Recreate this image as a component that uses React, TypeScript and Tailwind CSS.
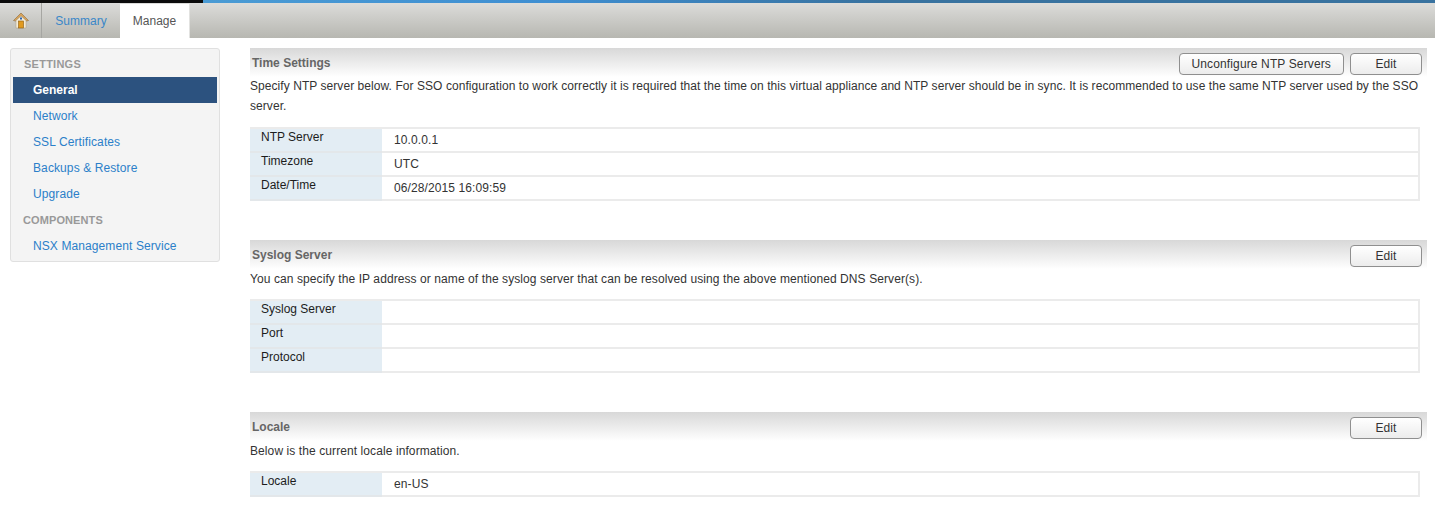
import React from 'react';

const Row: React.FC<{ label: string; value?: string }> = ({ label, value }) => (
  <div className="flex h-6">
    <div className="w-[132px] shrink-0 border-b-2 border-[#e3e7ea] bg-[#e3edf4] pl-[11px] leading-[16px] text-[#1c1c1c]">{label}</div>
    <div className="flex-1 border-b-2 border-r-2 border-[#ebebeb] pl-[12px] pt-[2px] tracking-[0.1px] text-[#333]">{value}</div>
  </div>
);

const Section: React.FC<{
  title: string;
  buttons: string[];
  desc: React.ReactNode;
  descClass: string;
  rows: { label: string; value?: string }[];
  className?: string;
}> = ({ title, buttons, desc, descClass, rows, className }) => (
  <section className={className}>
    <div className="flex h-[29px] items-start justify-between bg-gradient-to-b from-[#d8d8d8] to-white pl-[2px] pr-[5px]">
      <h2 className="pt-[6px] text-[12px] font-bold text-[#666]">{title}</h2>
      <div className="flex gap-[6px] pt-[5px]">
        {buttons.map((b) => (
          <button
            key={b}
            className="h-[22px] min-w-[72px] rounded-[4px] border border-[#8f8f8f] bg-gradient-to-b from-white to-[#ececec] px-[12px] text-[12px] tracking-[0.13px] text-[#333]"
          >
            {b}
          </button>
        ))}
      </div>
    </div>
    <p className={`leading-[20px] text-[#333] ${descClass}`}>{desc}</p>
    <div className="mr-[7px] border-t-2 border-[#ebebeb]">
      {rows.map((r) => (
        <Row key={r.label} label={r.label} value={r.value} />
      ))}
    </div>
  </section>
);

const App: React.FC = () => {
  return (
    <div className="h-[514px] w-[1435px] overflow-hidden bg-white font-['Liberation_Sans',Arial,sans-serif] text-[12px]">
      <div className="flex h-[3px]">
        <div className="w-[203px] bg-[#0c0c0c]" />
        <div className="flex-1 bg-gradient-to-r from-[#4a9bd4] via-[#3f8fd2] via-[28%] to-[#38729f] to-[55%]" />
      </div>
      <div className="flex h-[35px] bg-gradient-to-b from-[#dcdcda] to-[#b7b7b1]">
        <div className="flex w-[42px] items-center justify-center border-r border-[#a6a6a2] pb-[1px]">
          <svg width="16" height="17" viewBox="0 0 16 17">
            <path d="M8 1 L15.5 8.5 L13.5 9 L8 4 L2.5 9 L0.5 8.5 Z" fill="#d9a35a" stroke="#8a6a3a" strokeWidth="0.6" />
            <path d="M3 8.5 L8 4 L13 8.5 V16 H3 Z" fill="#f4ecd8" stroke="#a99a7c" strokeWidth="0.5" />
            <rect x="5.5" y="9" width="5" height="7" fill="#e19a1f" stroke="#8a5a10" strokeWidth="0.6" />
            <rect x="7" y="5.5" width="2" height="2" fill="#2a62b0" />
          </svg>
        </div>
        <div className="flex w-[78px] items-center justify-center text-[#3a87c8]">Summary</div>
        <div className="mt-[1px] flex w-[70px] items-center justify-center border-r border-[#e2e2e0] bg-white text-[#555]">Manage</div>
      </div>
      <div className="flex items-start pt-[10px]">
        <aside className="ml-[10px] h-[214px] w-[210px] shrink-0 rounded-[3px] border border-[#e0e0e0] bg-[#f4f4f4] px-[2px] tracking-[0.1px]">
          <div className="h-[28px] pl-[11px] pt-[7px] text-[11px] font-bold tracking-[0.25px] text-[#999]">SETTINGS</div>
          <div className="flex h-[26px] items-center bg-[#2c527f] pl-[20px] font-bold tracking-normal text-white">General</div>
          {['Network', 'SSL Certificates', 'Backups & Restore', 'Upgrade'].map((t) => (
            <div key={t} className="flex h-[26px] items-center pl-[20px] text-[#2b7fc9]">{t}</div>
          ))}
          <div className="flex h-[26px] items-center pl-[10px] text-[11px] font-bold text-[#999]">COMPONENTS</div>
          <div className="flex h-[26px] items-center pl-[20px] text-[#2b7fc9]">NSX Management Service</div>
        </aside>
        <main className="ml-[30px] flex-1 pr-[8px]">
          <Section
            title="Time Settings"
            buttons={['Unconfigure NTP Servers', 'Edit']}
            desc="Specify NTP server below. For SSO configuration to work correctly it is required that the time on this virtual appliance and NTP server should be in sync. It is recommended to use the same NTP server used by the SSO server."
            descClass="-mt-[1px] pb-[11px] tracking-[0.06px]"
            rows={[
              { label: 'NTP Server', value: '10.0.0.1' },
              { label: 'Timezone', value: 'UTC' },
              { label: 'Date/Time', value: '06/28/2015 16:09:59' },
            ]}
          />
          <Section
            className="mt-[39px]"
            title="Syslog Server"
            buttons={['Edit']}
            desc="You can specify the IP address or name of the syslog server that can be resolved using the above mentioned DNS Server(s)."
            descClass="pb-[10px] tracking-[0.085px]"
            rows={[{ label: 'Syslog Server' }, { label: 'Port' }, { label: 'Protocol' }]}
          />
          <Section
            className="mt-[39px]"
            title="Locale"
            buttons={['Edit']}
            desc="Below is the current locale information."
            descClass="pb-[10px] tracking-[0.09px]"
            rows={[{ label: 'Locale', value: 'en-US' }]}
          />
        </main>
      </div>
    </div>
  );
};

export default App;
